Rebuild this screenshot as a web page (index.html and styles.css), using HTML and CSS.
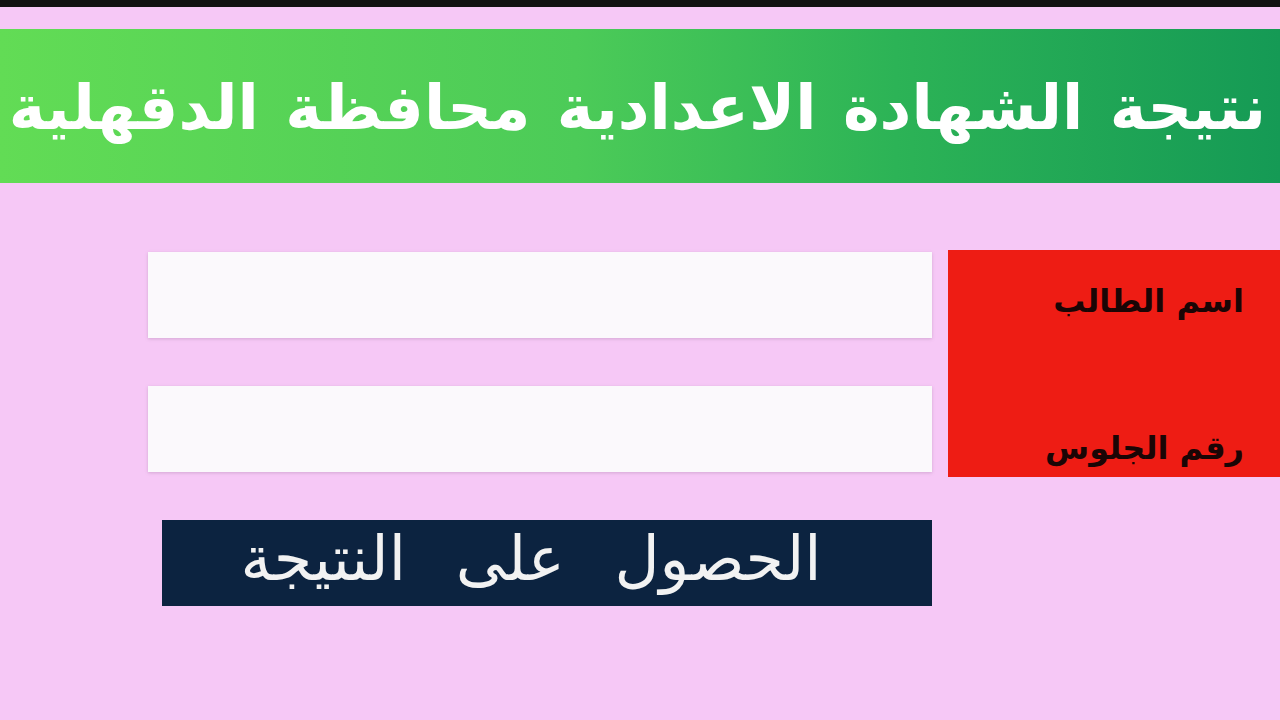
FILE: index.html
```html
<!DOCTYPE html>
<html lang="ar" dir="rtl">
<head>
    <meta charset="UTF-8">
    <meta name="viewport" content="width=device-width, initial-scale=1.0">
    <title>نتيجة الشهادة الاعدادية</title>
    <link rel="stylesheet" href="styles.css">
</head>
<body>
    <div class="topbar"></div>

    <div class="banner">
        <h1>نتيجة الشهادة الاعدادية محافظة الدقهلية</h1>
    </div>

    <div class="form">
        <div class="labels">
            <span>اسم الطالب</span>
            <span>رقم الجلوس</span>
        </div>
        <div class="fields">
            <input type="text" class="field">
            <input type="text" class="field">
            <button class="submit">الحصول على النتيجة</button>
        </div>
    </div>
</body>
</html>
```

FILE: styles.css
```css
*{
    margin: 0;
    padding: 0;
    box-sizing: border-box;
}

body{
    width: 1280px;
    height: 720px;
    overflow: hidden;
    background-color: #f6c8f6;
    font-family: "DejaVu Sans", sans-serif;
}

.topbar{
    height: 7px;
    background-color: #111;
}

.banner{
    margin-top: 22px;
    height: 154px;
    display: flex;
    align-items: center;
    padding-right: 14px;
    background: linear-gradient(to right, #62dc55 0%, #4ccb58 45%, #2cb356 70%, #159a55 100%);
}

.banner h1{
    color: #fff;
    font-size: 62px;
    font-weight: bold;
    word-spacing: 5px;
    white-space: nowrap;
    margin-top: 2px;
}

.form{
    display: flex;
    align-items: flex-start;
    gap: 16px;
    margin-top: 67px;
}

.labels{
    width: 332px;
    height: 227px;
    background-color: #ee1c14;
    display: flex;
    flex-direction: column;
    justify-content: space-between;
    padding: 32px 36px 10px 0;
    color: #1a0505;
    font-size: 32px;
    font-weight: bold;
}

.fields{
    width: 784px;
    display: flex;
    flex-direction: column;
    padding-top: 2px;
}

.field{
    height: 86px;
    border: none;
    background-color: #fbf9fc;
    box-shadow: 0 1px 3px rgba(150, 110, 150, 0.35);
    outline: none;
    margin-bottom: 48px;
}

.submit{
    width: 770px;
    height: 86px;
    align-self: flex-start;
    border: none;
    background-color: #0c2340;
    color: #f2f2f2;
    font-family: "DejaVu Serif", "DejaVu Sans", serif;
    font-size: 62px;
    word-spacing: 30px;
    text-align: center;
    padding-right: 32px;
    padding-bottom: 10px;
}
```
